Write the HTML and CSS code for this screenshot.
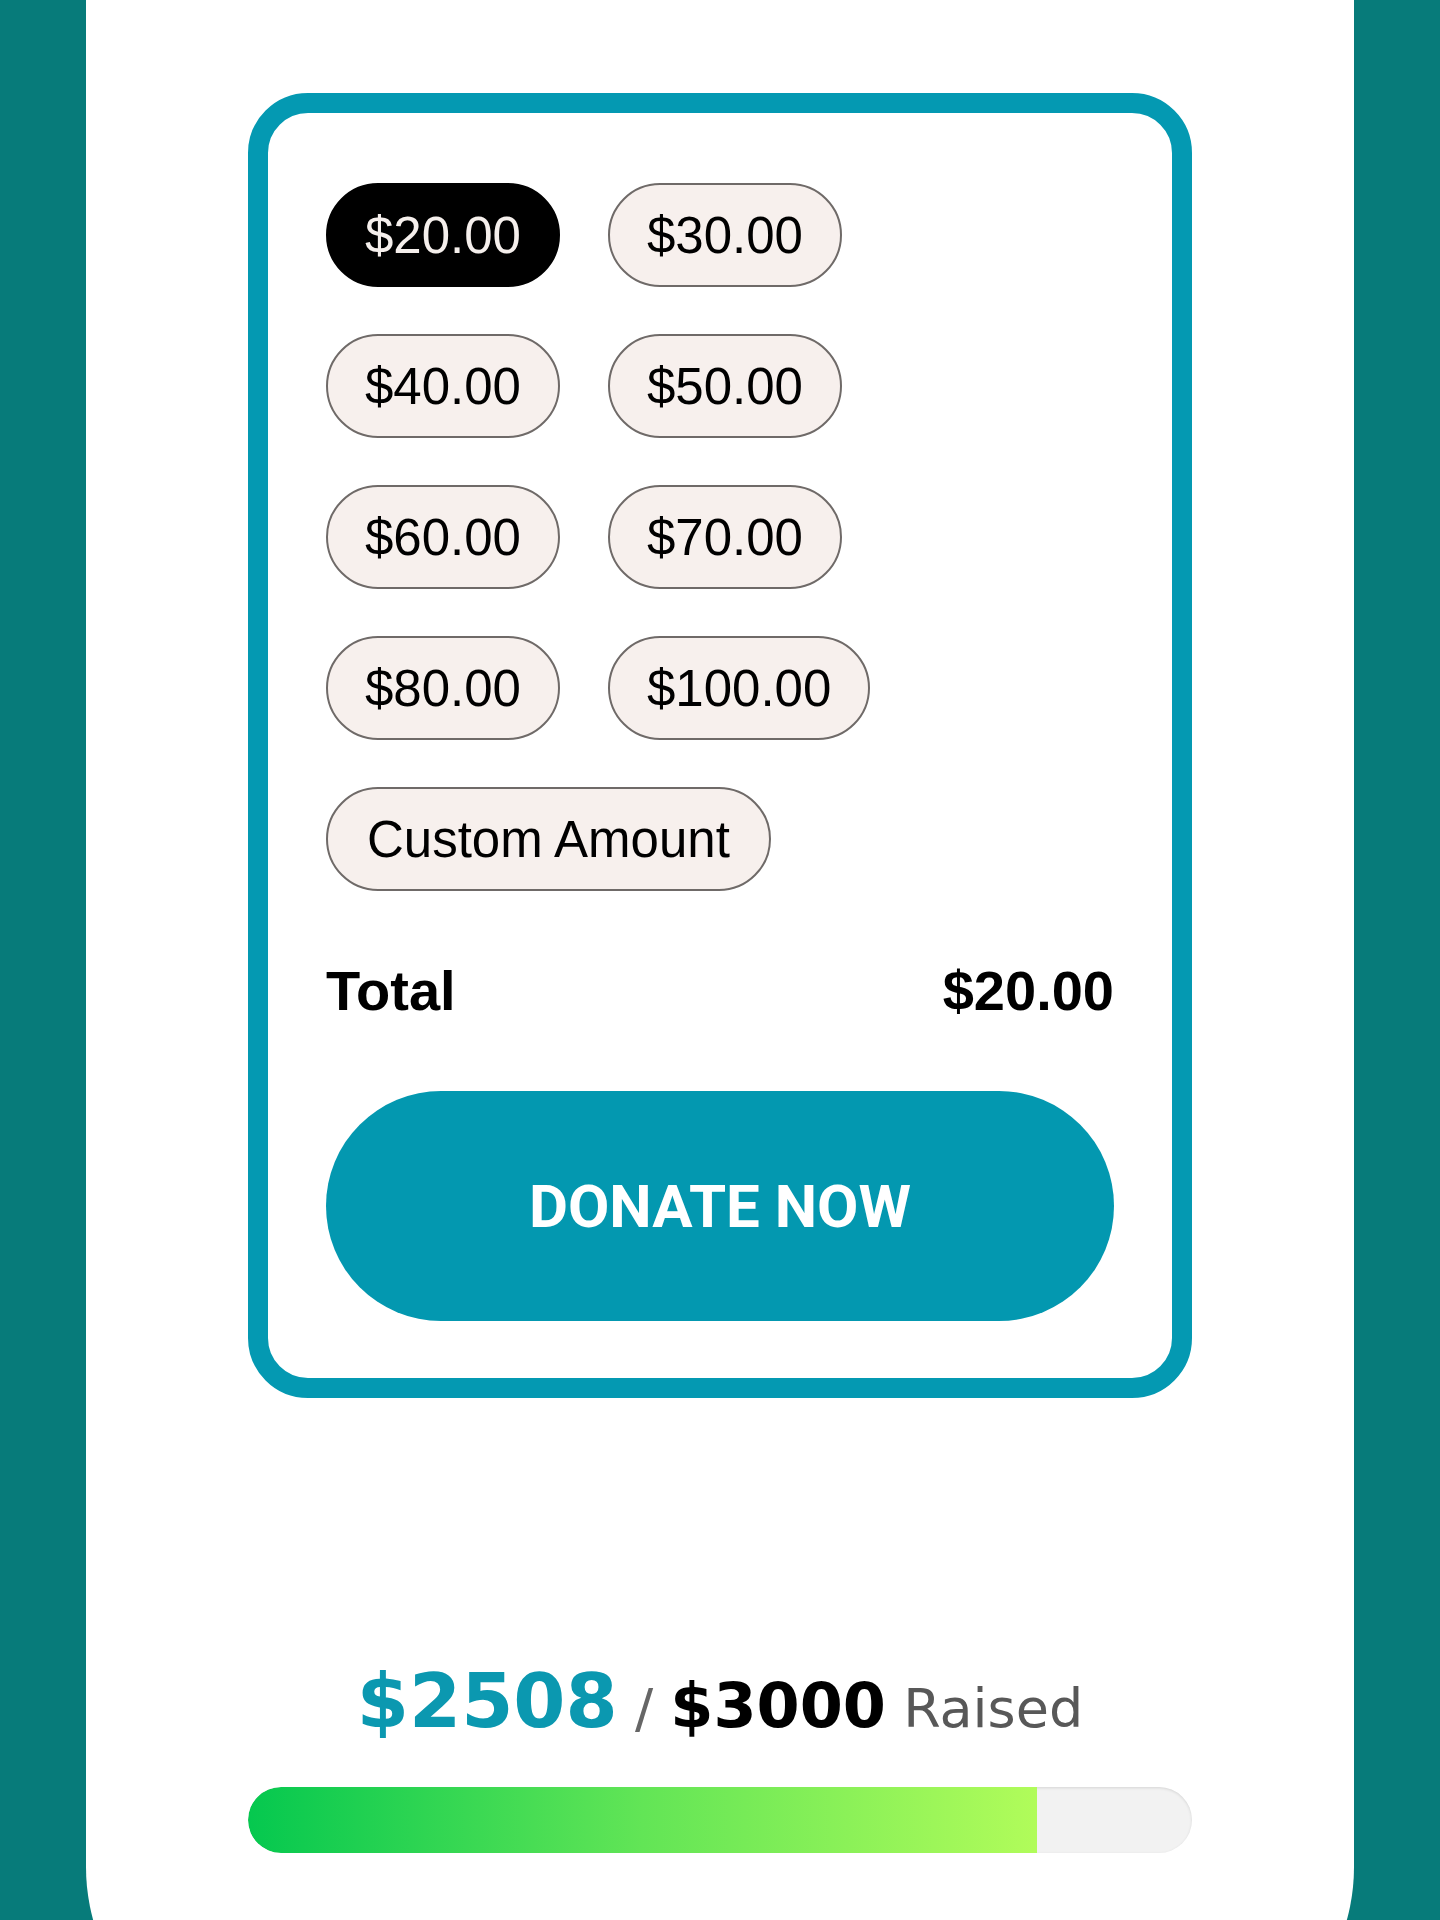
FILE: index.html
```html
<!DOCTYPE html>
<html lang="en">
<head>
<meta charset="utf-8">
<title>Donate</title>
<link rel="stylesheet" href="styles.css">
</head>
<body>
<div class="page">
  <main class="panel">
    <section class="card">
      <div class="amounts">
        <button class="amt selected">$20.00</button>
        <button class="amt">$30.00</button>
        <button class="amt">$40.00</button>
        <button class="amt">$50.00</button>
        <button class="amt">$60.00</button>
        <button class="amt">$70.00</button>
        <button class="amt">$80.00</button>
        <button class="amt">$100.00</button>
        <button class="amt custom">Custom Amount</button>
      </div>
      <div class="total">
        <span>Total</span>
        <span>$20.00</span>
      </div>
      <button class="donate">DONATE NOW</button>
    </section>
    <div class="raised"><span class="got">$2508</span> <span class="slash">/</span> <span class="goal">$3000</span> <span class="label">Raised</span></div>
    <div class="bar"><div class="fill" style="width: 83.6%"></div></div>
  </main>
</div>
</body>
</html>
```
FILE: styles.css
```css
html, body {
  margin: 0;
  padding: 0;
}
body {
  background: #077b7a;
  font-family: "Liberation Sans", Arial, sans-serif;
}
.page {
  height: 1920px;
  overflow: hidden;
}
.panel {
  width: 1268px;
  height: 2067px;
  margin: 0 auto;
  background: #ffffff;
  border-radius: 0 0 200px 200px;
  padding-top: 93px;
  box-sizing: border-box;
}
.card {
  width: 944px;
  margin: 0 auto;
  box-sizing: border-box;
  border: 20px solid #0499b2;
  border-radius: 60px;
  padding: 70px 58px 57px;
}
.amounts {
  display: grid;
  grid-template-columns: max-content max-content;
  column-gap: 48px;
  row-gap: 47px;
  justify-items: start;
}
.amt {
  height: 104px;
  box-sizing: border-box;
  padding: 0 37px;
  border: 2px solid #6f6a68;
  border-radius: 52px;
  background: #f7f0ed;
  color: #000;
  font-family: "Liberation Sans", Arial, sans-serif;
  font-size: 51px;
  display: inline-flex;
  align-items: center;
  margin: 0;
}
.amt.selected {
  background: #000;
  border-color: #000;
  color: #f5efec;
}
.amt.custom {
  grid-column: 1 / -1;
  padding: 0 39px;
}
.total {
  margin-top: 69px;
  display: flex;
  justify-content: space-between;
  font-weight: bold;
  font-size: 56px;
  line-height: 62px;
  color: #000;
}
.donate {
  display: block;
  margin-top: 69px;
  width: 100%;
  height: 230px;
  border: none;
  border-radius: 115px;
  background: #0398b0;
  color: #fff;
  font-family: Roboto, "Liberation Sans", sans-serif;
  font-weight: bold;
  font-size: 60px;
  letter-spacing: 0;
  padding: 0;
}
.raised {
  margin-top: 265px;
  text-align: center;
  font-family: "DejaVu Sans", sans-serif;
  font-size: 54px;
  line-height: 76px;
  color: #585858;
}
.got {
  font-size: 75px;
  font-weight: bold;
  color: #0b98b0;
}
.slash {
  color: #666;
}
.goal {
  font-size: 62px;
  font-weight: bold;
  color: #000;
}
.bar {
  width: 944px;
  height: 66px;
  margin: 40px auto 0;
  border-radius: 33px;
  background: #f2f2f2;
  box-shadow: inset 0 1px 3px rgba(0, 0, 0, 0.12);
  overflow: hidden;
}
.fill {
  height: 100%;
  border-radius: 33px 0 0 33px;
  background: linear-gradient(90deg, #05c84f 0%, #62e556 50%, #b1fc5a 100%);
}
```
